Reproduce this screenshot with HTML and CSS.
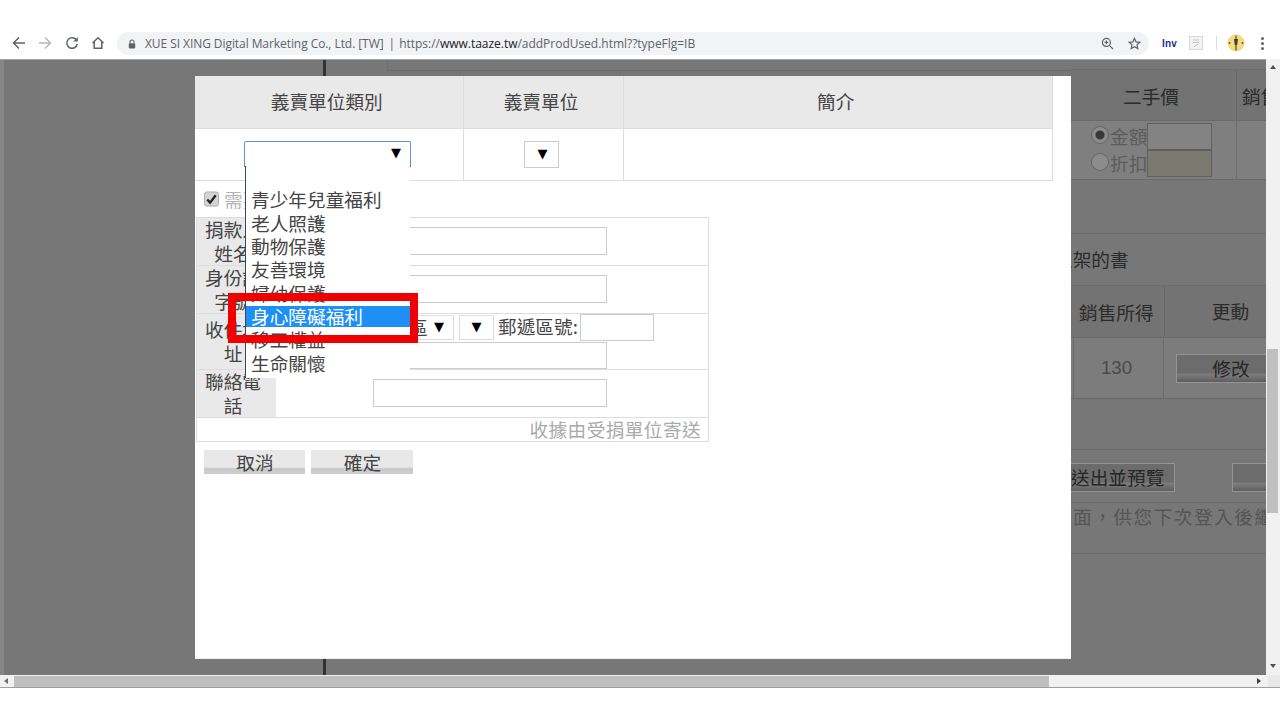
FILE: index.html
```html
<!DOCTYPE html>
<html lang="zh-Hant">
<head>
<meta charset="utf-8">
<title>addProdUsed</title>
<link rel="stylesheet" href="styles.css">
</head>
<body>
<div class="browser">
  <header class="toolbar">
    <svg class="tb-icon back" viewBox="0 0 14 14"><path d="M13 7H2M7 1.5 1.5 7 7 12.500"/></svg>
    <svg class="tb-icon forward" viewBox="0 0 14 14"><path d="M1 7h11M7 1.500 12.500 7 7 12.500"/></svg>
    <svg class="tb-icon reload" viewBox="0 0 14 14"><path d="M11.600 4.200A5.300 5.300 0 1 0 12.300 8"/><path class="fill" d="M12.800 1v4.500H8.300z"/></svg>
    <svg class="tb-icon home" viewBox="0 0 14 14"><path d="M1.500 7 7 1.800 12.500 7M3.200 6v6.300h7.600V6"/></svg>
    <div class="omnibox">
      <svg class="lock" viewBox="0 0 10 12"><path d="M2.500 5V3.500a2.500 2.500 0 0 1 5 0V5" fill="none" stroke="#5f6368" stroke-width="1.300"/><rect x="1" y="5" width="8" height="6.500" rx="1" fill="#5f6368"/></svg>
      <span class="org">XUE SI XING Digital Marketing Co., Ltd. [TW]</span>
      <span class="sep">|</span>
      <span class="url">https://<b>www.taaze.tw</b>/addProdUsed.html??typeFlg=IB</span>
      <svg class="omni-icon zoom-icon" viewBox="0 0 14 14"><circle cx="5.800" cy="5.800" r="4.300"/><path d="M9 9l4 4M3.800 5.800h4M5.800 3.800v4"/></svg>
      <svg class="omni-icon star" viewBox="0 0 14 14"><path d="M7 1.500 8.700 5.200l4 .5-3 2.700.8 4L7 10.400l-3.500 2 .8-4-3-2.700 4-.5z"/></svg>
    </div>
    <span class="inv">Inv</span>
    <svg class="ext" viewBox="0 0 14 14"><rect x=".5" y=".5" width="13" height="13" fill="#f3f3f3" stroke="#d8d8d8"/><path d="M4 4h6M4 6.500h6M5 11l4-3" stroke="#c4c4c4" fill="none"/></svg>
    <span class="tb-divider"></span>
    <svg class="avatar" viewBox="0 0 18 18"><circle cx="9" cy="9" r="8.500" fill="#f3dd7a"/><path d="M9 1.500v15" stroke="#4a4a3a" stroke-width="1.200"/><path d="M7 5h4l-.8 6H7.800z" fill="#3b3f4a"/><circle cx="2.500" cy="9" r="1" fill="#b8322a"/><circle cx="15.500" cy="9" r="1" fill="#b8322a"/></svg>
    <div class="kebab"><i></i><i></i><i></i></div>
  </header>

  <div class="viewport">
    <main class="page">
      <div class="strip strip-top"><span class="bar"></span><span class="strip-table"></span></div>

      <div class="left-gutter"></div>

      <section class="modal">
        <table class="unit-table">
          <tr class="head"><th class="c1">義賣單位類別</th><th class="c2">義賣單位</th><th class="c3">簡介</th></tr>
          <tr class="body">
            <td><div class="select select-open">▼</div></td>
            <td><div class="select select-small">▼</div></td>
            <td></td>
          </tr>
        </table>

        <div class="check-row">
          <svg class="check" viewBox="0 0 16 16"><rect x=".5" y=".5" width="15" height="15" rx="2.500" fill="#d4d4d4" stroke="#a8a8a8"/><path d="M3.500 8.500 6.500 12 12.500 4" fill="none" stroke="#222" stroke-width="2.400"/></svg>
          <span class="check-label">需要收據</span>
        </div>

        <div class="form-table">
          <div class="form-row r48">
            <div class="label"><span>捐款人姓名</span></div>
            <div class="field"><span class="input wide"></span></div>
          </div>
          <div class="form-row r48">
            <div class="label"><span>身份證字號</span></div>
            <div class="field"><span class="input wide"></span></div>
          </div>
          <div class="form-row r56">
            <div class="label"><span>收件地址</span></div>
            <div class="field field-address">
              <div class="address-line">
                <span class="box box-district">地區<span class="tri">▼</span></span>
                <span class="box box-arrow"><span class="tri">▼</span></span>
                <span class="zip-label">郵遞區號:</span>
                <span class="input zip"></span>
              </div>
              <span class="input wide address-input"></span>
            </div>
          </div>
          <div class="form-row r48">
            <div class="label"><span>聯絡電話</span></div>
            <div class="field"><span class="input wide"></span></div>
          </div>
          <div class="note">收據由受捐單位寄送</div>
        </div>

        <div class="actions">
          <span class="btn">取消</span>
          <span class="btn">確定</span>
        </div>

        <ul class="dropdown">
          <li>&nbsp;</li>
          <li>青少年兒童福利</li>
          <li>老人照護</li>
          <li>動物保護</li>
          <li>友善環境</li>
          <li>婦幼保護</li>
          <li class="active">身心障礙福利</li>
          <li>移工權益</li>
          <li>生命關懷</li>
        </ul>
        <div class="callout"></div>
      </section>

      <aside class="right-bg">
        <div class="bg-top"></div>
        <div class="bg-row bg-head1">
          <div class="bg-price">二手價</div>
          <div class="bg-sale">銷售所得</div>
        </div>
        <div class="bg-row bg-cell1">
          <div class="price-cell">
            <div class="radio-line"><span class="radio on"></span><span class="radio-text">金額</span><span class="bg-input"></span></div>
            <div class="radio-line"><span class="radio"></span><span class="radio-text">折扣</span><span class="bg-input dark"></span></div>
          </div>
        </div>
        <div class="bg-gap1"></div>
        <div class="bg-title">上架的書</div>
        <div class="bg-row bg-head2">
          <div class="col-sale">銷售所得</div>
          <div class="col-edit">更動</div>
        </div>
        <div class="bg-row bg-cell2">
          <div class="col-sale num">130</div>
          <div class="col-edit"><span class="bg-btn">修改</span></div>
        </div>
        <div class="bg-gap2"></div>
        <div class="bg-actions">
          <span class="bg-btn preview">送出並預覽</span>
          <span class="bg-btn blank"></span>
        </div>
        <div class="bg-note">面，供您下次登入後繼續編輯</div>
      </aside>

      <div class="strip strip-bottom"><span class="bar"></span></div>
    </main>

    <div class="vscroll">
      <span class="arrow-up"></span>
      <span class="vthumb"></span>
      <span class="arrow-down"></span>
    </div>
  </div>

  <div class="hscroll">
    <span class="arrow-left"></span>
    <span class="hthumb"></span>
    <span class="arrow-right"></span>
    <span class="corner"></span>
  </div>
</div>
</body>
</html>
```

FILE: styles.css
```css
* { box-sizing: border-box; }
html, body { margin: 0; padding: 0; }
body {
  width: 1280px;
  height: 720px;
  overflow: hidden;
  background: #fff;
  font-family: "Noto Sans CJK TC", "Liberation Sans", sans-serif;
  font-size: 18.67px;
  color: #444;
}
.browser { display: flex; flex-direction: column; height: 720px; }

/* toolbar */
.toolbar {
  height: 59px;
  padding-top: 32px;
  display: flex;
  align-items: flex-start;
  background: #fff;
  position: relative;
}
.tb-icon {
  width: 14px; height: 14px;
  margin-top: 4px;
  fill: none;
  stroke: #5f6368;
  stroke-width: 1.500;
  flex: none;
}
.tb-icon .fill { fill: #5f6368; stroke: none; }
.back { margin-left: 12px; }
.forward { margin-left: 12px; stroke: #b5b7ba; }
.reload { margin-left: 13px; }
.home { margin-left: 12px; }
.omnibox {
  margin-left: 12px;
  width: 1032px;
  height: 23px;
  border-radius: 12px;
  background: #f1f3f4;
  display: flex;
  align-items: center;
  padding-left: 11px;
  font-family: "Open Sans", "Liberation Sans", sans-serif;
  font-size: 12px;
  color: #5f6368;
  white-space: nowrap;
}
.lock { width: 8px; height: 10px; flex: none; }
.org { margin-left: 9px; letter-spacing: -.07px; }
.sep { margin-left: 5px; }
.url { margin-left: 4px; letter-spacing: -.02px; }
.url b { font-weight: 400; color: #202124; }
.omni-icon {
  width: 13px; height: 13px;
  fill: none;
  stroke: #5f6368;
  stroke-width: 1.300;
  flex: none;
}
.zoom-icon { margin-left: auto; }
.star { margin-left: 14px; margin-right: 8px; }
.inv {
  margin-left: 13px;
  margin-top: 5px;
  width: 15px;
  font: 700 10px/13px "Liberation Sans", sans-serif;
  color: #1c2f8f;
  letter-spacing: .2px;
}
.ext { width: 14px; height: 14px; margin-left: 12px; margin-top: 4px; flex: none; }
.tb-divider { width: 1px; height: 14px; margin-left: 13px; margin-top: 4px; background: #ddd; }
.avatar { width: 18px; height: 18px; margin-left: 10px; margin-top: 2px; flex: none; }
.kebab { margin-left: 16px; margin-top: 5px; display: flex; flex-direction: column; gap: 2px; }
.kebab i { display: block; width: 3px; height: 3px; border-radius: 50%; background: #5f6368; }

/* viewport */
.viewport { height: 616px; display: flex; flex: none; }
.page {
  width: 1266px;
  height: 616px;
  display: grid;
  grid-template-columns: 195px 876px 195px;
  grid-template-rows: 16px 583px 16px;
  background: #777;
  border-top: 1px solid #a5a5a5;
  overflow: hidden;
}
.strip { grid-column: 1 / 3; display: flex; position: relative; }
.strip-top { height: 16px; border-left: 4px solid #868686; }
.strip-bottom { border-left: 4px solid #868686; }
.bar { width: 3px; margin-left: 319px; background: #333; flex: none; }
.strip-table {
  flex: none;
  margin-left: 61px;
  width: 684px;
  height: 11px;
  border-left: 1px solid #6e6e6e;
  border-bottom: 1px solid #6c6c6c;
}
.left-gutter { border-left: 4px solid #868686; }

/* modal */
.modal {
  position: relative;
  background: #fff;
  border-bottom: 1px solid #eee;
  height: 583px;
}
.unit-table {
  width: 858px;
  table-layout: fixed;
  border-collapse: collapse;
}
.unit-table th, .unit-table td { padding: 0; text-align: center; border: 1px solid #ddd; }
.unit-table tr > :first-child { border-left: 0; }
.unit-table .head > * { border-top: 0; }
.unit-table .head th {
  height: 52px;
  padding: 0 4px 2px 0;
  background: #e9e9e9;
  font-weight: 400;
  font-size: 18.67px;
}
.c1 { width: 268px; }
.c2 { width: 160px; }
.unit-table .body td { height: 52px; vertical-align: top; padding-top: 12px; }
.select {
  display: flex;
  align-items: center;
  justify-content: flex-end;
  font: 13px/1 "DejaVu Sans", sans-serif;
  color: #000;
  background: #fff;
  padding-bottom: 2px;
}
.select-open {
  width: 167px;
  height: 26px;
  margin-left: 49px;
  padding-right: 9px;
  border: 1px solid #5f93d8;
  border-bottom-color: #2d3a55;
  border-radius: 2px 2px 0 0;
}
.select-small {
  width: 35px;
  height: 27px;
  margin-left: 60px;
  padding-right: 10px;
  border: 1px solid #ccc;
}

.check-row { height: 36px; display: flex; align-items: center; padding-left: 9px; }
.check { width: 15px; height: 16px; flex: none; }
.check-label { margin-left: 5px; color: #b5b5b5; }

.form-table {
  margin-left: 1px;
  width: 513px;
  border: 1px solid #ddd;
}
.form-row { display: flex; border-bottom: 1px solid #ddd; }
.r48 { height: 48px; }
.r56 { height: 56px; }
.label {
  width: 79px;
  flex: none;
  padding: 0 9px 0 2px;
  display: flex;
  align-items: center;
  justify-content: center;
  background: #e9e9e9;
  text-align: center;
  line-height: 24px;
}
.field { flex: 1; padding: 9px 0 0 97px; }
.input {
  display: block;
  border: 1px solid #ccc;
  background: #fff;
}
.wide { width: 234px; height: 28px; }
.field-address { padding-top: 0; padding-left: 0; }
.address-line { display: flex; align-items: flex-start; height: 28px; }
.box {
  display: flex;
  align-items: center;
  justify-content: center;
  height: 25px;
  margin-top: 1px;
  padding-bottom: 2px;
  border: 1px solid #ddd;
  background: #fff;
  font-size: 18.67px;
  white-space: nowrap;
}
.tri { font: 13px/1 "DejaVu Sans", sans-serif; color: #000; }
.box-district { margin-left: 97px; width: 81px; justify-content: flex-end; padding-right: 9px; gap: 6px; }
.box-arrow { margin-left: 5px; width: 35px; }
.zip-label { margin-left: 4px; width: 82px; white-space: nowrap; line-height: 24px; }
.zip { width: 74px; height: 27px; }
.address-input { margin-left: 97px; height: 27px; }
.note {
  height: 23px;
  padding-right: 7px;
  text-align: right;
  line-height: 21px;
  letter-spacing: .4px;
  color: #aaa;
}
.actions { display: flex; gap: 6px; padding: 8px 0 0 9px; }
.btn {
  width: 101px;
  height: 24px;
  padding-left: 1px;
  text-align: center;
  line-height: 24px;
  background: linear-gradient(#e8e8e8 0, #e8e8e8 72%, #c8c8c8 78%, #cfcfcf 100%);
}
.actions .btn:last-child { width: 102px; }

/* dropdown + annotation: float over the form */
.dropdown {
  position: absolute;
  left: 50px;
  top: 90px;
  width: 165px;
  height: 212px;
  margin: 0;
  padding: 0;
  list-style: none;
  background: #fff;
  border-left: 1px solid #3a4560;
}
.dropdown li {
  height: 23.33px;
  line-height: 23.33px;
  padding-left: 5px;
  white-space: nowrap;
}
.dropdown li:first-child { height: 21.33px; }
.dropdown .active { background: linear-gradient(transparent 2.500px, #1e8ff5 2.500px); color: #fff; }
.callout {
  position: absolute;
  left: 33px;
  top: 217px;
  width: 190px;
  height: 50px;
  border: 8px solid #f00000;
}

/* dimmed page behind the modal */
.right-bg {
  grid-column: 3;
  grid-row: 1 / 4;
  color: #2b2b2b;
  overflow: hidden;
}
.bg-top { height: 10px; border-bottom: 1px solid #6c6c6c; }
.bg-row { display: flex; border-bottom: 1px solid #6a6a6a; }
.bg-head1 { height: 51px; background: #737373; align-items: center; }
.bg-price { width: 166px; flex: none; padding-right: 5px; text-align: center; border-right: 1px solid #696969; height: 100%; line-height: 51px; }
.bg-sale { padding-left: 5px; white-space: nowrap; }
.bg-cell1 { height: 59px; background: #7f7f7f; }
.price-cell { width: 166px; flex: none; border-right: 1px solid #6c6c6c; padding: 2px 0 0 20px; color: #5c5c5c; }
.radio-line { display: flex; align-items: center; height: 27px; white-space: nowrap; }
.radio {
  width: 18px; height: 18px;
  margin: 0 1px 3px 0;
  flex: none;
  border-radius: 50%;
  border: 1px solid #666;
  background: #8c8c8c;
}
.radio-text { margin-bottom: 3px; }
.radio.on { background: radial-gradient(circle, #383838 0, #383838 4px, #8c8c8c 5px); }
.bg-input { width: 65px; height: 27px; flex: none; border: 1px solid #606060; background: #838383; }
.bg-input.dark { background: #7a7a70; }
.bg-gap1 { height: 54px; border-bottom: 1px solid #6c6c6c; }
.bg-title { height: 52px; line-height: 50px; margin-left: -17px; border-bottom: 1px solid #6c6c6c; }
.bg-head2 { height: 52px; align-items: center; background: #737373; }
.col-sale { width: 93px; padding-left: 8px; flex: none; white-space: nowrap; text-align: left; }
.col-edit { flex: 1; text-align: center; white-space: nowrap; }
.bg-head2 .col-edit { padding-left: 30px; border-left: 1px solid #696969; height: 100%; line-height: 50px; }
.bg-cell2 { height: 61px; background: #7c7c7c; align-items: center; color: #3a3a3a; }
.bg-cell2 > * { height: 100%; display: flex; align-items: center; }
.bg-cell2 .col-sale { border-right: 1px solid #6c6c6c; border-left: 1px solid #6c6c6c; margin-left: 2px; width: 91px; padding: 0 4px 0 0; justify-content: center; }
.bg-cell2 .num { font: 18.67px "Liberation Sans", sans-serif; color: #4a4a4a; }
.bg-cell2 .col-edit { padding-left: 12px; justify-content: flex-start; }
.bg-btn {
  display: block;
  flex: none;
  height: 29px;
  line-height: 26px;
  text-align: center;
  border: 1px solid #949494;
  background: linear-gradient(#6c6c6c 0, #6c6c6c 65%, #7c7c7c 72%, #5e5e5e 100%);
  color: #262626;
  white-space: nowrap;
}
.bg-cell2 .bg-btn { width: 110px; }
.bg-gap2 { height: 51px; border-bottom: 1px solid #6c6c6c; }
.bg-actions { height: 53px; display: flex; padding-top: 13px; border-bottom: 1px solid #6c6c6c; }
.preview { width: 104px; border-left: 0; text-align: left; padding-left: 0; }
.blank { width: 60px; margin-left: 57px; }
.bg-note {
  height: 51px;
  line-height: 26px;
  padding: 0 0 0 2px;
  color: #555;
  letter-spacing: 1.500px;
  white-space: nowrap;
  border-bottom: 1px solid #6c6c6c;
}

/* scrollbars */
.vscroll {
  width: 14px;
  flex: none;
  background: #f1f1f1;
  position: relative;
}
.vthumb {
  position: absolute;
  left: 1px;
  top: 290px;
  width: 11px;
  height: 164px;
  background: #c0c0c0;
}
.arrow-up, .arrow-down {
  position: absolute;
  left: 4px;
  width: 0; height: 0;
  border-left: 3px solid transparent;
  border-right: 3px solid transparent;
}
.arrow-up { top: 6px; border-bottom: 4px solid #505050; }
.arrow-down { top: 605px; border-top: 4px solid #505050; }
.hscroll {
  height: 13px;
  flex: none;
  display: flex;
  align-items: center;
  background: #f1f1f1;
  position: relative;
  border-bottom: 1px solid #9aa0a6;
}
.hthumb { width: 1035px; height: 11px; margin-left: 6px; background: #bfbfbf; flex: none; }
.arrow-left, .arrow-right {
  width: 0; height: 0;
  border-top: 3px solid transparent;
  border-bottom: 3px solid transparent;
  flex: none;
}
.arrow-left { margin-left: 4px; border-right: 4px solid #707070; }
.arrow-right { margin-left: 208px; border-left: 4px solid #404040; }
.corner { width: 12px; height: 100%; margin-left: auto; background: #e8e8e8; }
```
